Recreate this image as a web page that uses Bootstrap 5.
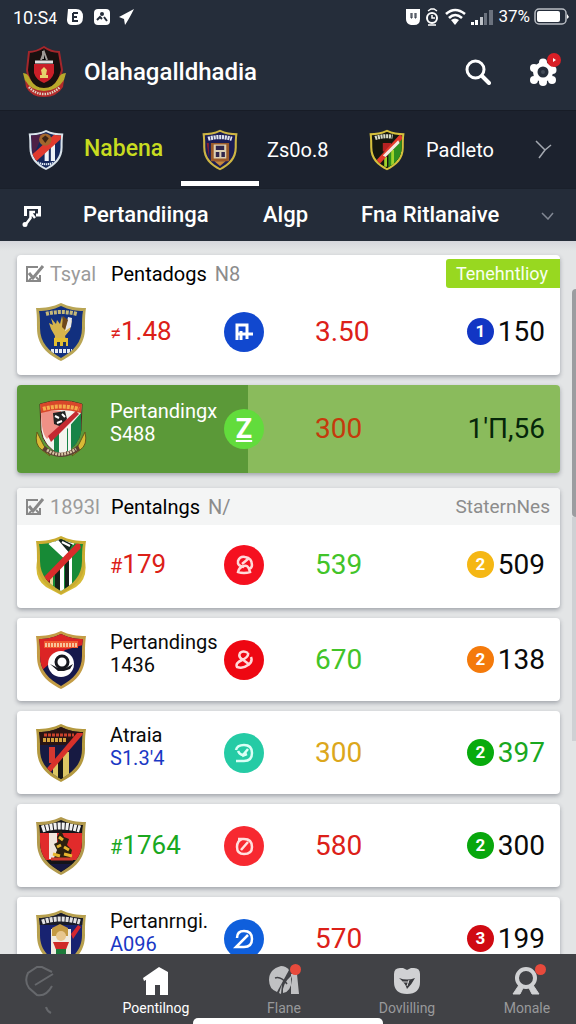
<!DOCTYPE html>
<html lang="id">
<head>
<meta charset="utf-8">
<meta name="viewport" content="width=device-width, initial-scale=1">
<title>Olahagalldhadia</title>
<link rel="stylesheet" href="https://cdn.jsdelivr.net/npm/bootstrap@5.3.0/dist/css/bootstrap.min.css">
<style>
  body { font-family: Roboto, "Liberation Sans", sans-serif; background: #e1e3e5; color: #0a0a0a; }
  a { color: inherit; text-decoration: none; }
  .icon-btn { background: none; border: 0; padding: 0; color: inherit; line-height: 0; }
  .top-area { background: #252d3a; color: #fff; }
  .status-line { height: 34px; padding: 0 6px 0 13px; font-size: 18px; }
  .battery-text { font-size: 17px; }
  .app-line { height: 76px; padding: 0 19px 0 21px; }
  .app-name { font-size: 24px; font-weight: 500; line-height: 32px; }
  .app-actions { gap: 38px; }
  .alert-dot { position: absolute; top: -5px; right: -4px; width: 14px; height: 14px; background: #d81f26; }
  .team-tabs { height: 78px; background: #1c222e; color: #fff; display: grid; grid-template-columns: 153fr 167fr 187fr 41px; padding-left: 28px; border-top: 1px solid #171c26; font-size: 20px; }
  .team-tabs .current-name { color: #c8dc20; font-weight: 500; font-size: 23px; margin-left: 20px; }
  .crest-tab { width: 78px; position: relative; }
  .crest-tab.on::after { content: ""; position: absolute; left: 0; right: 0; bottom: 2px; height: 5px; background: #fff; }
  .filter-line { height: 53px; background: #242c39; color: #fff; display: grid; grid-template-columns: 61fr 180fr 98fr 180fr 35px; align-items: center; padding-left: 22px; font-size: 22px; font-weight: 500; border-top: 1px solid #1a202b; }
  .filter-line button { text-align: left; font-weight: 500; line-height: 28px; white-space: nowrap; }
  .feed { background: linear-gradient(#d5d6dc, #e3e5e6 10px); padding: 14px 16px 0 17px; min-height: 0; gap: 10px; }
  .scroll-thumb { position: absolute; right: 0; top: 48px; width: 4px; height: 228px; background: #9b9da0; border-radius: 4px 0 0 4px; }
  .scroll-rest { position: absolute; right: 0; top: 276px; width: 4px; height: 224px; background: #cfd1d4; }
  .game { background: #fff; border-radius: 4px; box-shadow: 0 2px 4px rgba(60,65,80,.4); overflow: hidden; flex: none; }
  .game.section-start { margin-top: 5px; }
  .game-top { height: 37px; padding-left: 8px; font-size: 20px; line-height: 24px; color: #8c8c8c; }
  .game-top.shade { background: #f4f5f5; }
  .head-left { width: 86px; color: #9b9b9b; }
  .tick { appearance: none; width: 20px; height: 20px; margin: 0 5px 0 0; background: no-repeat center url("data:image/svg+xml,%3Csvg xmlns='http://www.w3.org/2000/svg' viewBox='0 0 20 20' fill='none' stroke='%23888'%3E%3Cpath d='M13 3H2v14h13v-6' stroke-width='2'/%3E%3Cpath d='M4 9l4 5L18 2' stroke-width='3'/%3E%3Cpath d='M4 16l4-3M11 13l4 4' stroke-width='2'/%3E%3C/svg%3E"); }
  .live-tag { background: #98d820; color: #f8fff0; height: 29px; line-height: 29px; padding: 0 12px 0 10px; border-radius: 3px 0 0 3px; font-size: 18px; }
  .head-note { font-size: 19px; margin-right: 10px; }
  .game-row { min-height: 83px; padding: 0 15px 0 18px; display: grid; grid-template-columns: 75px minmax(0,114fr) minmax(0,91fr) minmax(0,230fr); align-items: center; }
  .game-top + .game-row { padding-bottom: 4px; }
  .game-row.tall { min-height: 88px; }
  .side { font-size: 20px; line-height: 23px; white-space: nowrap; padding-bottom: 12px; }
  .odd { font-size: 26px; line-height: 32px; }
  .odd small { font-size: 20px; }
  .score { font-size: 28px; line-height: 32px; }
  .disc { width: 40px; height: 40px; display: grid; place-items: center; color: #fff; font-size: 27px; font-weight: 700; line-height: 32px; }
  .coin { width: 27px; height: 27px; color: #fff; font-size: 17px; font-weight: 700; line-height: 27px; text-align: center; margin-right: 4px; }
  .picked { background: linear-gradient(90deg, #5b9938 42.6%, #8abb5c 42.6%); }
  .picked .score.r { color: #c53a0c; }
  .picked .total { color: #06260a; }
  .r { color: #dc2018; } .g { color: #42c428; } .g2 { color: #1aa81f; } .y { color: #dca71c; } .b { color: #1a38c4; }
  .bottom-bar { height: 70px; background: #414246; color: #98999b; display: grid; grid-template-columns: 80fr 152fr 104fr 142fr 98fr; font-size: 14px; line-height: 20px; position: relative; }
  .bottom-bar a { display: flex; flex-direction: column; align-items: center; padding-top: 10px; gap: 2px; }
  .bottom-bar .on { color: #fff; }
  .note-dot { position: absolute; top: 0; right: 0; width: 11px; height: 11px; background: #e74a3c; }
  .home-pill { position: absolute; bottom: 0; left: 50%; width: 190px; height: 6px; margin-left: -95px; background: #fff; border-radius: 5px 5px 0 0; }
</style>
</head>
<body class="vh-100 d-flex flex-column overflow-hidden">

<svg width="0" height="0" class="position-absolute" aria-hidden="true">
  <defs>
    <path id="shield" d="M26 1C18 5 10 6 1 6c1 7 1 12 1 20 0 17 10 26 24 33 14-7 24-16 24-33 0-8 0-13 1-20-9 0-17-1-25-5z"/>
    <clipPath id="inside"><path d="M26 4C18 8 11 9 4 9c1 5 1 10 1 17 0 15 9 23 21 30 12-7 21-15 21-30 0-7 0-12 1-17-7 0-14-1-22-5z"/></clipPath>
  </defs>
</svg>

<header class="top-area flex-shrink-0">
  <div class="status-line d-flex align-items-center">
    <span class="me-2">10:S<small>4</small></span>
    <svg width="72" height="20" viewBox="0 0 72 20" fill="#fff" aria-hidden="true"><path d="M3 2h8q7 0 7 8t-7 8H7q-5 0-5-5z"/><path d="M8 6h5M8 6v8M8 10h4M7 14h6" stroke="#252d3a" stroke-width="2"/><rect x="29" y="2" width="16" height="16" rx="4"/><circle cx="37" cy="7" r="2" fill="#252d3a"/><path d="M32 13l3-3 2 2M42 14l-3-4" stroke="#252d3a" stroke-width="2" fill="none"/><path d="M69 2L54 10l5 2 1 6q4-6 9-16z"/></svg>
    <svg class="ms-auto" width="90" height="20" viewBox="0 0 90 20" fill="#fff" aria-hidden="true"><path d="M2 2h14v10q0 6-6 6H7q-5-1-5-6z"/><path d="M7 6v5h1V6M11 6v5h1V6" stroke="#252d3a" fill="none"/><circle cx="28" cy="11" r="5" fill="none" stroke="#fff" stroke-width="2"/><path d="M24 4l3-2h3l3 2M28 8v3h3M24 18h8" fill="none" stroke="#fff" stroke-width="1.5"/><path d="M42 7q9-8 19 0M45 11q6-6 13 0" fill="none" stroke="#fff" stroke-width="2.6"/><path d="M47 13q4-3 8 0l-4 5z"/><path d="M67 15h3v3h-3zM71 13h3v5h-3z"/><path d="M76 10h3v8h-3z" fill="#bfc3c9"/><path d="M80 6h3v12h-3zM85 3h4v15h-4z" fill="#6b727e"/></svg>
    <span class="ms-1 me-1 battery-text">37%</span>
    <svg width="36" height="18" viewBox="0 0 36 18" aria-hidden="true"><rect x="1" y="1" width="31" height="15" rx="4" fill="none" stroke="#b9bdc4" stroke-width="1.5"/><rect x="3" y="3" width="23" height="11" rx="2" fill="#fff"/><path d="M33 6v5l2-2z" fill="#fff"/></svg>
  </div>
  <div class="app-line d-flex align-items-center">
    <svg width="47" height="52" viewBox="0 0 47 52" aria-hidden="true"><path d="M23 1Q15 6 8 6L6 24q2 16 17 24 15-8 18-24L38 6Q30 6 23 1z" fill="#18100f" stroke="#a4262b" stroke-width="2"/><path d="M13 18h20v9q-2 7-10 10-8-3-10-10z" fill="#c91f28"/><path d="M14 16h18" stroke="#ddd" stroke-width="3"/><path d="M22 5v8M20 14l3-8 3 8" stroke="#9e9a96" stroke-width="2"/><path d="M20 24l3-3 3 3-1 5h2v3h-8v-3h2z" fill="#e6d36c"/><path d="M2 27q5 0 7 6 5 9 14 9t14-9q2-6 8-6l-2 7q-3 12-20 15Q8 46 4 35z" fill="#b8a92b"/><path d="M4 34q6 11 19 11t20-11l-1 7q-6 10-19 10T5 41z" fill="#b22a2b"/><path d="M8 41q6 7 15 7t16-7" fill="none" stroke="#ddd2c0" stroke-width="2.5" stroke-dasharray="1.5 1"/></svg>
    <h1 class="app-name mb-0 ms-3">Olahagalldhadia</h1>
    <div class="app-actions d-flex align-items-center ms-auto">
      <button class="icon-btn" aria-label="Cari"><svg width="26" height="26" viewBox="0 0 26 26" fill="none" stroke="#fff"><circle cx="10.500" cy="10.500" r="8.500" stroke-width="3"/><path d="M17 17l7 7" stroke-width="4" stroke-linecap="round"/></svg></button>
      <button class="icon-btn position-relative" aria-label="Pengaturan"><svg width="28" height="28" viewBox="0 0 28 28" fill="#fff"><circle cx="14" cy="14" r="10"/><circle cx="14" cy="4.500" r="4"/><circle cx="5" cy="10" r="4"/><circle cx="5" cy="22" r="4"/><circle cx="14" cy="24" r="4"/><circle cx="23" cy="22" r="4"/><circle cx="23.500" cy="12" r="4"/><circle cx="14" cy="14" r="5.500" fill="#252d3a"/><circle cx="14" cy="14" r="2" fill="#424a57"/></svg><span class="alert-dot rounded-circle"><svg class="d-block" width="14" height="14" viewBox="0 0 14 14"><path d="M6 5l3 2-3 2z" fill="#fff"/></svg></span></button>
    </div>
  </div>
</header>

<nav class="team-tabs flex-shrink-0" aria-label="Tim">
  <a href="#" class="d-flex align-items-center">
    <svg width="36" height="42" viewBox="0 0 52 60" aria-hidden="true"><use href="#shield" fill="#d9e3ea"/><g clip-path="url(#inside)"><path fill="#15285c" d="M0 0h52v60H0z"/><path d="M4 6h18L7 40z" fill="#4c1f46"/><path d="M24 26h6v20h-6zM33 20h6v26h-6z" fill="#eef2f6"/><path d="M0 42L42 4h8v8L10 48z" fill="#e03a2e"/><circle cx="25" cy="15" r="9" fill="#a2662c"/><path d="M20 13l5-4 5 4-5 7z" fill="#3c2415"/><path d="M14 48q12 5 25 0" stroke="#dfe9f2" stroke-width="3" stroke-dasharray="2 1" fill="none"/></g></svg>
    <span class="current-name">Nabena</span>
  </a>
  <a href="#" class="d-flex align-items-center">
    <span class="crest-tab on h-100 d-flex align-items-center justify-content-center"><svg width="38" height="42" viewBox="0 0 52 60" aria-hidden="true"><use href="#shield" fill="#cdb544"/><g clip-path="url(#inside)"><path fill="#1b1d54" d="M0 0h52v60H0z"/><path d="M9 14q17-5 34 0" stroke="#dfe3ee" stroke-width="6" stroke-dasharray="3 1" fill="none"/><path d="M13 20h26v26H13z" fill="#9b5a2a"/><path d="M17 22h18v20H17z" fill="#dccfb4"/><path d="M20 24h12v6H20zM20 33h5v7h-5zM28 33h5v7h-5z" fill="#30264c"/><path d="M18 46h16l-8 7z" fill="#c8893a"/><path d="M7 20h3v20z" fill="#8d2030"/></g></svg></span>
    <span class="ms-2">Zs0o.8</span>
  </a>
  <a href="#" class="d-flex align-items-center">
    <span class="crest-tab h-100 d-flex align-items-center justify-content-center"><svg width="38" height="42" viewBox="0 0 52 60" aria-hidden="true"><use href="#shield" fill="#d5c03c"/><g clip-path="url(#inside)"><path fill="#15170f" d="M0 0h52v60H0z"/><path d="M28 58V28L50 8v50z" fill="#2f8f1e"/><path d="M20 20h12v12H20z" fill="#b52222"/><path d="M22 40h4v14h-4zM32 30h4v22h-4z" fill="#9fd32a"/><path d="M8 48L46 6l2 8L12 54z" fill="#e23a2c"/><path d="M20 38L42 16l2 4-20 20z" fill="#f3e9e2"/><path d="M9 13q12-4 25-2" stroke="#d7dcc8" stroke-width="6" stroke-dasharray="3 1" fill="none"/></g></svg></span>
    <span>Padleto</span>
  </a>
  <button class="icon-btn text-start" aria-label="Berikutnya"><svg width="18" height="20" viewBox="0 0 18 20" fill="none" stroke="#a3a8b0" stroke-width="1.5"><path d="M1 1l9 9 6-5M10 10l-6 8"/></svg></button>
</nav>

<div class="filter-line flex-shrink-0">
  <button class="icon-btn" aria-label="Saring"><svg width="20" height="24" viewBox="0 0 20 24" fill="none" stroke="#fff" stroke-width="3"><path d="M3.500 12V3.500h14V11H14"/><path d="M13 8H8.500v6L4 20M9 9l4 5" stroke-width="2.500"/><circle cx="3" cy="20.500" r="1.500" fill="#fff" stroke-width="2"/></svg></button>
  <button class="icon-btn">Pertandiinga</button>
  <button class="icon-btn">Algp</button>
  <button class="icon-btn">Fna Ritlanaive</button>
  <button class="icon-btn" aria-label="Lainnya"><svg width="13" height="8" viewBox="0 0 13 8" fill="none" stroke="#828894" stroke-width="1.500"><path d="M1 1l6 6 5-6"/></svg></button>
</div>

<main class="feed flex-grow-1 d-flex flex-column position-relative overflow-hidden">
  <span class="scroll-rest"></span><span class="scroll-thumb"></span>

  <article class="game">
    <div class="game-top d-flex align-items-center">
      <label class="head-left d-flex align-items-center"><input type="checkbox" class="tick" checked>Tsyal</label>
      <span class="text-black">Pentadogs</span><span class="ms-2">N8</span>
      <span class="live-tag ms-auto">Tenehntlioy</span>
    </div>
    <div class="game-row">
      <svg width="52" height="60" viewBox="0 0 52 60" aria-hidden="true"><use href="#shield" fill="#b9a554"/><g clip-path="url(#inside)"><path fill="#12307f" d="M0 0h52v60H0z"/><path d="M11 12q15-4 31 0" stroke="#c5b878" stroke-width="4" stroke-dasharray="3 1" fill="none"/><path d="M16 16l5 6 1-4 3 4 2-8 2 8 3-4v5l5-5-2 10-5 6 2 8H19l1-8-4-7-2-6 4 2z" fill="#d6b44c"/><path d="M33 15l4 1-1 9-6 4z" fill="#e8e8ea"/><path d="M28 14l5 4-3 10-3-3z" fill="#6d481c"/><path d="M19 36h14v8H19z" fill="#e2bd31"/><path d="M22 44v-4h3v4M28 44v-4h3v4" fill="#193163"/><path d="M16 49h21" stroke="#e6ebf2" stroke-width="4" stroke-dasharray="3 1"/></g></svg>
      <div class="odd r"><small>≠</small>1.48</div>
      <span class="disc rounded-circle" style="background:#1148cf"><svg width="20" height="20" viewBox="0 0 20 20" fill="none" stroke="#fff" stroke-width="3"><path d="M3 18V3h10v14M3 12h16M7 18V9"/></svg></span>
      <div class="d-flex align-items-center justify-content-between score"><span class="r">3.50</span><span class="d-flex align-items-center"><b class="coin rounded-circle" style="background:#1236c4">1</b>150</span></div>
    </div>
  </article>

  <article class="game picked">
    <div class="game-row tall">
      <svg width="52" height="60" viewBox="0 0 52 60" aria-hidden="true"><path d="M2 33q-3 13 5 18l8 6-7-12zM50 33q3 13-5 18l-8 6 7-12z" fill="#d9ba35" stroke="#665a1b"/><path d="M5 5q21-7 42 0l-1 26q-2 17-20 25Q8 48 6 31z" fill="#f4f4ef" stroke="#4b2a1c"/><path d="M6 12h20v14L12 40Q6 34 6 12z" fill="#ef9186"/><path d="M46 14v20q-3 12-14 19V30zM24 34v20l-5-2V38z" fill="#188448"/><path d="M36 24v28l-3 2V27z" fill="#f4f4ef"/><path d="M5 5q21-7 42 0l-1 9q-20-6-40 0z" fill="#d8472a"/><path d="M8 10q18-5 36 0" stroke="#f4ad4c" stroke-width="4" stroke-dasharray="3 1" fill="none"/><path d="M18 14l12-2 2 8-5 8-8-3z" fill="#222"/><path d="M20 17l4 2M27 15l3 3M22 24l5-2" stroke="#fff" stroke-width="2"/><path d="M13 37L41 12l3 3-28 28z" fill="#c42931"/><path d="M10 47q16 14 33-1l2 5Q26 65 7 51z" fill="#5b4033"/><path d="M12 51q14 9 29-1" fill="none" stroke="#d8c4a4" stroke-width="3" stroke-dasharray="2 1"/></svg>
      <div class="side text-white">Pertandingx<br>S488</div>
      <span class="disc rounded-circle" style="background:#62dc3c"><span class="text-decoration-underline">Z</span></span>
      <div class="d-flex align-items-center justify-content-between score r"><span>300</span><span class="total">1'Π,56</span></div>
    </div>
  </article>

  <article class="game section-start">
    <div class="game-top shade d-flex align-items-center">
      <label class="head-left d-flex align-items-center"><input type="checkbox" class="tick" checked>1893l</label>
      <span class="text-black">Pentalngs</span><span class="ms-2">N/</span>
      <span class="ms-auto head-note">StaternNes</span>
    </div>
    <div class="game-row">
      <svg width="52" height="62" viewBox="0 0 52 60" aria-hidden="true"><path d="M2 26q-3 18 9 26l15 8 15-8q12-8 9-26z" fill="#d6bb37"/><use href="#shield" fill="#c9ac32"/><g clip-path="url(#inside)"><path fill="#178a36" d="M0 0h52v60H0z"/><path d="M18 4h22l-9 18z" fill="#17251f"/><path d="M15 9l6-5 12 14-4 4zM27 7l8 4M31 5l8 4" fill="#fff" stroke="#fff" stroke-width="2"/><path d="M14 38h4v20h-4z" fill="#e9d89b"/><path d="M25 28h4v30h-4zM34 22h3v30h-3z" fill="#fff"/><path d="M20 34h5v24h-5zM30 26h4v30h-4z" fill="#14201a"/><path d="M11 42h4v14h-4z" fill="#7e1b1b"/><path d="M7 44L44 6l2 7L10 50z" fill="#d92c2b"/></g></svg>
      <div class="odd r"><small>#</small>179</div>
      <span class="disc rounded-circle" style="background:#f5101f"><svg width="22" height="22" viewBox="0 0 22 22" fill="none" stroke="#ffdada" stroke-width="2.500"><path d="M11 13q-7-1-6-6 2-5 7-4 7 1 7 8 0 3-3 4M16 15q-1-4-5-3-5 1-6 6 6 2 12 0zM9 10l6-5"/></svg></span>
      <div class="d-flex align-items-center justify-content-between score"><span class="g">539</span><span class="d-flex align-items-center"><b class="coin rounded-circle" style="background:#f5b714">2</b>509</span></div>
    </div>
  </article>

  <article class="game">
    <div class="game-row">
      <svg width="52" height="60" viewBox="0 0 52 60" aria-hidden="true"><use href="#shield" fill="#c39c45"/><g clip-path="url(#inside)"><path fill="#16194c" d="M0 0h52v60H0z"/><path d="M0 0h52v14L30 20 5 42H0z" fill="#dc2425"/><path d="M9 11h34v7H9z" fill="#ef5830"/><path d="M10 15h32" stroke="#f8c49a" stroke-width="4" stroke-dasharray="2 1"/><circle cx="26" cy="34" r="13" fill="#fff"/><circle cx="27" cy="32" r="6" fill="none" stroke="#16171e" stroke-width="3"/><path d="M15 34l8 4h8l7-4-3 5-6 2h-6z" fill="#16171e"/></g></svg>
      <div class="side">Pertandings<br>1436</div>
      <span class="disc rounded-circle" style="background:#ee0712"><svg width="22" height="22" viewBox="0 0 22 22" fill="none" stroke="#ffdada" stroke-width="2.500"><path d="M15 4q-5-3-8 0-2 4 2 6l8 6M15 4q1 4-6 7-7 3-5 7 6 2 11-2 5-3 3-8"/></svg></span>
      <div class="d-flex align-items-center justify-content-between score"><span class="g">670</span><span class="d-flex align-items-center"><b class="coin rounded-circle" style="background:#f47a0b">2</b>138</span></div>
    </div>
  </article>

  <article class="game">
    <div class="game-row">
      <svg width="52" height="60" viewBox="0 0 52 60" aria-hidden="true"><use href="#shield" fill="#b4993f"/><g clip-path="url(#inside)"><path fill="#171a42" d="M0 0h52v60H0z"/><path d="M4 4h44v6L30 22H4z" fill="#2a1414"/><path d="M9 12h30" stroke="#c8402c" stroke-width="3" stroke-dasharray="3 1"/><path d="M8 17h24" stroke="#d4a13d" stroke-width="4" stroke-dasharray="3 1"/><path d="M14 24h6v16h-6z" fill="#d43830"/><path d="M18 39h5v18h-5zM28 29h6v27h-6z" fill="#dcc663"/><path d="M23 34h5v24h-5z" fill="#151515"/><path d="M8 50L42 10h7L13 52z" fill="#d8312a"/></g></svg>
      <div class="side">Atraia<br><span class="b">S1.3'4</span></div>
      <span class="disc rounded-circle" style="background:#25cba5"><svg width="22" height="22" viewBox="0 0 22 22" fill="none" stroke="#dcfff6" stroke-width="2.500"><path d="M3 8q1-5 8-5 8 0 8 8t-8 8H3M5 9q2 4 5 4l5-6M9 14l5-2"/></svg></span>
      <div class="d-flex align-items-center justify-content-between score"><span class="y">300</span><span class="d-flex align-items-center g2"><b class="coin rounded-circle" style="background:#08ab0d">2</b>397</span></div>
    </div>
  </article>

  <article class="game">
    <div class="game-row">
      <svg width="52" height="60" viewBox="0 0 52 60" aria-hidden="true"><use href="#shield" fill="#b29a4d"/><g clip-path="url(#inside)"><path fill="#141419" d="M0 0h52v60H0z"/><path d="M5 17h42v19l-5 8H10l-5-8z" fill="#e12b2b"/><path d="M14 17h8v26h-8z" fill="#f0e5dc"/><path d="M7 13q18-6 38 0" stroke="#f1f1f1" stroke-width="7" stroke-dasharray="3 1" fill="none"/><path d="M26 14l3 7 5 2-2 6 5 5-2 8H19l3-8-3-6 4-2-1-5z" fill="#2b2110"/><path d="M24 21l4 3M22 31l4-2M29 31l5 3M18 38l7 2M29 38l8 2" stroke="#e7b52f" stroke-width="3"/><path d="M16 43h22" stroke="#cf3b2d" stroke-width="3"/><path d="M15 48h22l-11 8z" fill="#17183f"/></g></svg>
      <div class="odd g2"><small>#</small>1764</div>
      <span class="disc rounded-circle" style="background:#f72930"><svg width="22" height="22" viewBox="0 0 22 22" fill="none" stroke="#ffe1df" stroke-width="2.500"><path d="M5 4h6q8 0 8 8 0 7-8 7-7 0-7-7 0-6 5-8M8 15l7-8"/></svg></span>
      <div class="d-flex align-items-center justify-content-between score"><span class="r">580</span><span class="d-flex align-items-center"><b class="coin rounded-circle" style="background:#08a70d">2</b>300</span></div>
    </div>
  </article>

  <article class="game">
    <div class="game-row">
      <svg width="52" height="60" viewBox="0 0 52 60" aria-hidden="true"><use href="#shield" fill="#b7a04e"/><g clip-path="url(#inside)"><path fill="#182371" d="M0 0h52v60H0z"/><path d="M3 3h46v13H3z" fill="#191b27"/><path d="M7 13q18-6 38 0" stroke="#e2e2e2" stroke-width="5" stroke-dasharray="3 1" fill="none"/><path d="M16 20h20v34H16z" fill="#f0ece2"/><path d="M17 19l8-4 8 4v8H17z" fill="#c49a43"/><circle cx="26" cy="27" r="5" fill="#e8c78e"/><path d="M18 33h16l-4 10h-8z" fill="#cf2a28"/><path d="M21 40h10v6H21z" fill="#1d7a3a"/><path d="M36 25l7-9 3 2-8 12z" fill="#d4262f"/><path d="M17 47h18v5H17z" fill="#d8c12b"/></g></svg>
      <div class="side">Pertanrngi.<br><span class="b">A096</span></div>
      <span class="disc rounded-circle" style="background:#0f5fdc"><svg width="22" height="22" viewBox="0 0 22 22" fill="none" stroke="#fff" stroke-width="2.500"><path d="M4 10q0-7 7-7 8 0 8 8t-8 8H3L15 7"/></svg></span>
      <div class="d-flex align-items-center justify-content-between score"><span class="r">570</span><span class="d-flex align-items-center"><b class="coin rounded-circle" style="background:#d00a12">3</b>199</span></div>
    </div>
  </article>
</main>

<nav class="bottom-bar flex-shrink-0" aria-label="Menu utama">
  <a href="#" aria-label="Jelajah"><svg width="32" height="50" viewBox="0 0 32 50" fill="none" stroke="#66686c" stroke-width="2"><path d="M28 8L18 3h-5L4 9q-4 8 1 15l8 7q9 2 15-9M11 21L29 10M22 43q1 4 5 6"/></svg></a>
  <a href="#" class="on"><svg width="32" height="32" viewBox="0 0 32 32" fill="#fff"><path d="M6 15l15-9 7 5v20h-8V21h-5v10H6z"/><path d="M3 14L19 3l9 5v5l-8-5L4 17z"/></svg>Poentilnog</a>
  <a href="#"><span class="position-relative lh-1"><svg width="34" height="32" viewBox="0 0 34 32" fill="#c0c1c3"><path d="M14 2q-12 3-12 14 0 9 8 12L22 6q-3-4-8-4z"/><path d="M24 10h6l2 20h-8zM24 12q-9 8-8 17 8-1 9-14zM12 29l3-9-1 10z"/><path d="M8 14q6-2 12 6" fill="none" stroke="#414246" stroke-width="1.500"/></svg><span class="note-dot rounded-circle"></span></span>Flane</a>
  <a href="#"><svg width="32" height="32" viewBox="0 0 32 32"><path d="M3 10q0-6 6-6h3l4 2 4-2h3q6 0 6 6v8q0 12-13 12T3 18z" fill="#d0d1d3"/><path d="M8 14q8 3 16 0-3 6-8 11-1-5-8-11z" fill="#38393d"/><path d="M12 18h6M18 16l-2 6" stroke="#d0d1d3"/></svg>Dovlilling</a>
  <a href="#"><span class="position-relative lh-1"><svg width="38" height="32" viewBox="0 0 38 32" fill="none" stroke="#d0d1d3"><circle cx="18" cy="14" r="9" stroke-width="4"/><path d="M11 21l-6 9h7l3-6M25 21l6 9h-7l-3-6" fill="#d0d1d3" stroke-width="1"/></svg><span class="note-dot rounded-circle"></span></span>Monale</a>
  <span class="home-pill"></span>
</nav>

<script src="https://cdn.jsdelivr.net/npm/bootstrap@5.3.0/dist/js/bootstrap.bundle.min.js"></script>
</body>
</html>
